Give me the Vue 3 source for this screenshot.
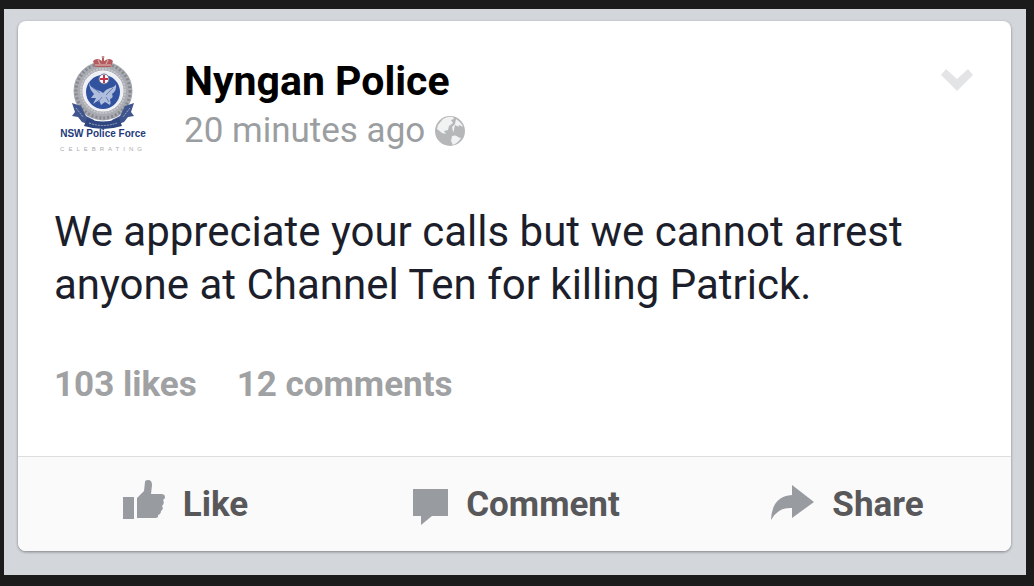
<template>
  <div class="feed">
    <article class="card">
      <div class="content">
        <header class="header">
          <div class="avatar">
            <svg class="crest" viewBox="1 0 70 74" aria-hidden="true">
              <circle cx="36" cy="36" r="25" fill="none" stroke="#a9abb1" stroke-width="9" />
              <circle cx="36" cy="36" r="27" fill="none" stroke="#858890" stroke-width="3" stroke-dasharray="2 2" />
              <circle cx="36" cy="36" r="22" fill="none" stroke="#c3c5ca" stroke-width="2" stroke-dasharray="2 1" />
              <circle cx="36" cy="36" r="20" fill="#eef0f6" />
              <circle cx="36" cy="37" r="17" fill="#31529f" />
              <path d="M22 27q1 6 8 8 4 1 6 3 3-4 7-5 5-1 6-4 1 7-4 10 2 4-2 5 1 4 0 6l-5-3-4 3-2-5-6 4 3-6-5 0 3-4q-5-5-5-12z" fill="#aebedc" />
              <path d="M25 32l8 6M46 33l-7 7M35 42l-4 5M39 42l3 5" stroke="#6880b6" fill="none" />
              <circle cx="37" cy="24" r="5" fill="#fff" stroke="#65708f" />
              <path d="M37 20v8M33 24h8" stroke="#c7334a" stroke-width="2" />
              <path d="M5 48l9 3 5 10 8 4-1 6-11-4-4-5-6-1 3-4zM67 48l-9 3-5 10-8 4 1 6 11-4 4-5 6-1-3-4z" fill="#40558e" />
              <path d="M20 63q16 7 32 0l3 8q-19 6-38 0z" fill="#2f4680" />
              <path d="M22 68q14 5 28 0M9 53l7 9M63 53l-7 9" fill="none" stroke="#9ca8c6" stroke-dasharray="2 1" />
              <path d="M28 12l-2-6q4-4 9 0V1h2v5q6-4 9 0l-2 6z" fill="#b65a62" />
              <path d="M28 10h16M31 5l2 4M41 5l-2 4M34 2h4" stroke="#dcc4b5" fill="none" />
            </svg>
            <span class="force">NSW Police Force</span>
            <span class="celebrating">CELEBRATING</span>
          </div>
          <div class="meta">
            <h1 class="name">Nyngan Police</h1>
            <p class="time">
              20 minutes ago
              <svg class="globe" viewBox="0 0 30 30" role="img" aria-label="Public">
                <circle cx="15" cy="15" r="15" fill="#b5b7b9" />
                <path d="M8 3q5-3 10-2l1 2-3 1 2 3-4 3-1 4-4 1 2 3-4-1-5-4 1-4zM21 3q5 3 7 8l-4-2-1 3 4 3-3 2-6-1-1-5 3-3zM17 20l5-1 4 3q-3 5-8 7l-2-4z" fill="#f1f2f2" />
                <path d="M2 14l5 4 4 2 1 5-1 4Q3 26 1 18zM20 9l6 3 3 5-4 5-7-4z" fill="#b5b7b9" />
              </svg>
            </p>
          </div>
          <button class="menu" type="button" aria-label="Post options">
            <svg viewBox="0 0 32 24" aria-hidden="true">
              <path d="M5 1l11 10L27 1l5 6-16 16L0 7z" fill="#e3e4e6" />
            </svg>
          </button>
        </header>
        <p class="message">{{ message }}</p>
        <div class="stats">
          <span>{{ likes }} likes</span>
          <span>{{ comments }} comments</span>
        </div>
      </div>
      <footer class="actions">
        <button v-for="action in actions" :key="action.label" class="action" type="button">
          <svg :class="action.icon" :viewBox="action.viewBox" aria-hidden="true">
            <path :d="action.path" />
          </svg>
          {{ action.label }}
        </button>
      </footer>
    </article>
  </div>
</template>

<script setup>
import { ref } from 'vue';

const message = ref('We appreciate your calls but we cannot arrest anyone at Channel Ten for killing Patrick.');
const likes = ref(103);
const comments = ref(12);

const actions = [
  {
    label: 'Like',
    icon: 'thumb',
    viewBox: '0 0 42 48',
    path: 'M0 17h11v22H0zM14 18l7-7 1-9q0-2 3-2 4 0 4 5l-1 9h10q4 0 4 3 0 2-2 3 2 3-1 6 2 3-1 5 0 3-3 4 1 3-4 3H14z',
  },
  {
    label: 'Comment',
    icon: 'bubble',
    viewBox: '0 -9 35 48',
    path: 'M0 0h35v27H19L8 36v-9H0z',
  },
  {
    label: 'Share',
    icon: 'arrow',
    viewBox: '0 -5 43 48',
    path: 'M0 35Q1 11 21 10V0l22 17-22 16V23Q7 22 0 35z',
  },
];
</script>

<style>
body {
  margin: 0;
  background: #1b1b1b;
}
</style>

<style scoped>
.feed {
  margin: 9px 8px 11px 4px;
  padding: 12px 15px 24px 14px;
  background: #d3d6db;
  font-family: Roboto, "Liberation Sans", sans-serif;
}

.card {
  overflow: hidden;
  border-radius: 8px;
  background: #fff;
  box-shadow: 0 1px 3px rgba(0, 0, 0, 0.4);
}

.content {
  padding: 34px 36px 47px;
}

.header {
  display: flex;
  align-items: flex-start;
}

.avatar {
  display: flex;
  flex-direction: column;
  align-items: center;
  width: 98px;
}

.crest {
  width: 70px;
  height: 74px;
}

.force {
  color: #233a78;
  font: bold 10px/10px "Liberation Sans", sans-serif;
  white-space: nowrap;
}

.celebrating {
  margin-top: 6px;
  color: #a9a9ac;
  font: 6px/8px "Liberation Sans", sans-serif;
  letter-spacing: 4px;
}

.meta {
  flex: 1;
  padding-left: 32px;
}

.name {
  margin: 0;
  color: #000;
  font-size: 41px;
  font-weight: 700;
  line-height: 52px;
}

.time {
  display: flex;
  align-items: center;
  gap: 10px;
  margin: 0;
  color: #9b9ea1;
  font-size: 35px;
  line-height: 48px;
}

.globe {
  width: 30px;
  height: 30px;
}

.menu {
  margin: 13px 2px 0 0;
  padding: 0;
  border: 0;
  background: none;
  cursor: pointer;
}

.menu svg {
  display: block;
  width: 32px;
  height: 24px;
}

.message {
  margin: 50px 0 0;
  color: #1c1f2b;
  font-size: 42px;
  line-height: 53px;
}

.stats {
  display: flex;
  gap: 40px;
  margin-top: 50px;
  color: #9fa1a3;
  font-size: 35px;
  font-weight: 700;
  line-height: 48px;
}

.actions {
  display: flex;
  border-top: 1px solid #dddee0;
  background: #fafafa;
}

.action {
  display: flex;
  flex: 1;
  align-items: center;
  justify-content: center;
  gap: 18px;
  height: 94px;
  padding: 0 0 0 4px;
  border: 0;
  background: none;
  color: #58585a;
  font-family: inherit;
  font-size: 35px;
  font-weight: 700;
  cursor: pointer;
}

.action svg {
  height: 48px;
  fill: #989ba0;
}

.thumb {
  width: 42px;
}

.bubble {
  width: 35px;
}

.arrow {
  width: 43px;
}
</style>
